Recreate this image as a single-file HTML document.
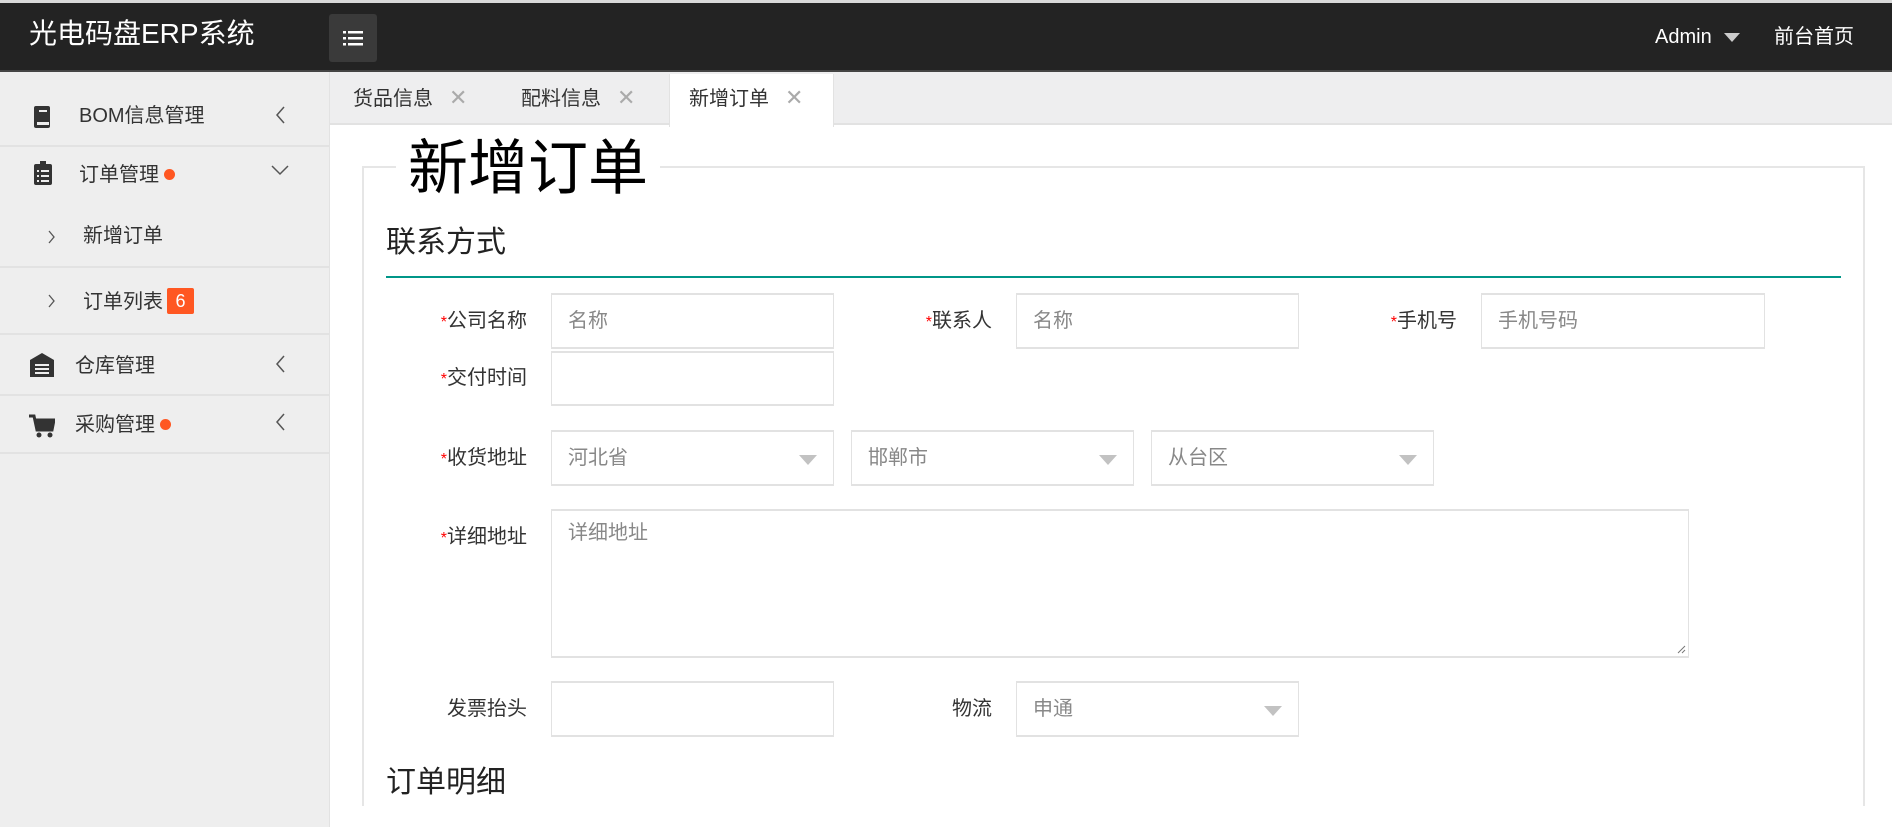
<!DOCTYPE html>
<html><head><meta charset="utf-8"><style>
*{box-sizing:border-box;margin:0;padding:0}
body{width:1892px;height:827px;overflow:hidden;background:#fff;font-family:"Liberation Sans","Noto Sans CJK SC",sans-serif;position:relative;color:#333}
.abs{position:absolute}
#top{left:0;top:0;width:1892px;height:72px;background:#232323;border-top:3px solid #d9d9d9;border-bottom:2px solid #444}
#side{left:0;top:72px;width:330px;height:755px;background:#eeeeee;border-right:1px solid #e2e2e2}
.div{position:absolute;left:0;width:330px;height:2px;background:#e2e2e2}
.st{position:absolute;font-size:20px;color:#333;line-height:24px}
.chev{position:absolute;left:274px}
.dot{display:inline-block;width:11px;height:11px;border-radius:50%;background:#ff5722;margin-left:5px;vertical-align:1px}
#tabs{left:330px;top:72px;width:1562px;height:53px;background:#eeeeef;border-bottom:2px solid #e2e2e2}
.tab{position:absolute;top:14px;font-size:20px;color:#333;line-height:24px}
.x{color:#aaa;margin-left:16px;font-size:22px}
.lab{position:absolute;font-size:20px;text-align:right;width:140px;line-height:24px;color:#333}
.lab b{color:#f00;font-weight:normal;font-size:16px}
.inp{position:absolute;border:1px solid #e2e2e2;border-top-width:2px;border-bottom-width:2px;background:#fff;font-size:20px;color:#888;padding-left:16px;line-height:52px}
.arr{position:absolute;right:16px;top:23px;width:0;height:0;border-left:9px solid transparent;border-right:9px solid transparent;border-top:10px solid #c2c2c2}
</style></head><body>
<div id="top" class="abs">
 <div class="abs" style="left:29px;top:13px;font-size:28px;color:#fff;line-height:36px">光电码盘ERP系统</div>
 <div class="abs" style="left:329px;top:11px;width:48px;height:48px;background:#3a3a3a;border-radius:3px">
  <svg width="48" height="48" viewBox="0 0 48 48"><g fill="#fff"><rect x="14" y="17" width="3" height="2.5"/><rect x="19" y="17" width="15" height="2.5"/><rect x="14" y="23" width="3" height="2.5"/><rect x="19" y="23" width="15" height="2.5"/><rect x="14" y="29" width="3" height="2.5"/><rect x="19" y="29" width="15" height="2.5"/></g></svg>
 </div>
 <div class="abs" style="left:1655px;top:21px;font-size:20px;color:#fff;line-height:26px">Admin</div>
 <div class="abs" style="left:1724px;top:30px;border-left:8px solid transparent;border-right:8px solid transparent;border-top:9px solid #ccc"></div>
 <div class="abs" style="left:1774px;top:21px;font-size:20px;color:#fff;line-height:26px">前台首页</div>
</div>
<div id="side" class="abs">
 <div class="div" style="top:73px"></div><div class="div" style="top:194px"></div><div class="div" style="top:261px"></div><div class="div" style="top:322px"></div><div class="div" style="top:380px"></div>
 <svg class="abs" style="left:33px;top:33px" width="20" height="24" viewBox="0 0 20 24"><rect x="1" y="1" width="16" height="22" rx="2" fill="#333"/><rect x="4" y="17" width="12" height="3" fill="#eee"/><rect x="6" y="5" width="8" height="2" fill="#eee"/></svg>
 <div class="st" style="left:79px;top:32px">BOM信息管理</div>
 <svg class="chev" style="top:33px" width="12" height="20" viewBox="0 0 12 20"><path d="M10 2 L3 10 L10 18" fill="none" stroke="#555" stroke-width="1.5"/></svg>
 <svg class="abs" style="left:33px;top:88px" width="20" height="26" viewBox="0 0 20 26"><rect x="1" y="4" width="18" height="21" rx="2" fill="#333"/><rect x="7" y="1" width="6" height="5" fill="#333"/><g fill="#eee"><rect x="4" y="10" width="2" height="2"/><rect x="8" y="10" width="8" height="2"/><rect x="4" y="15" width="2" height="2"/><rect x="8" y="15" width="8" height="2"/><rect x="4" y="20" width="2" height="2"/><rect x="8" y="20" width="8" height="2"/></g></svg>
 <div class="st" style="left:79px;top:91px">订单管理<span class="dot"></span></div>
 <svg class="abs" style="left:270px;top:92px" width="20" height="12" viewBox="0 0 20 12"><path d="M2 2 L10 10 L18 2" fill="none" stroke="#555" stroke-width="1.5"/></svg>
 <svg class="abs" style="left:48px;top:158px" width="8" height="14" viewBox="0 0 8 14"><path d="M1 1 L6 7 L1 13" fill="none" stroke="#555" stroke-width="1.3"/></svg>
 <div class="st" style="left:83px;top:152px">新增订单</div>
 <svg class="abs" style="left:48px;top:222px" width="8" height="14" viewBox="0 0 8 14"><path d="M1 1 L6 7 L1 13" fill="none" stroke="#555" stroke-width="1.3"/></svg>
 <div class="st" style="left:83px;top:216px">订单列表<span style="display:inline-block;width:27px;height:26px;background:#ff5722;color:#fff;text-align:center;margin-left:4px;border-radius:2px;font-size:18px;line-height:26px;vertical-align:1px">6</span></div>
 <svg class="abs" style="left:29px;top:280px" width="26" height="26" viewBox="0 0 26 26"><path d="M1 8 L13 1 L25 8 V25 H1Z" fill="#333"/><g fill="#eee"><rect x="6" y="12" width="14" height="2"/><rect x="6" y="16" width="14" height="2"/><rect x="6" y="20" width="14" height="2"/></g></svg>
 <div class="st" style="left:75px;top:282px">仓库管理</div>
 <svg class="chev" style="top:282px" width="12" height="20" viewBox="0 0 12 20"><path d="M10 2 L3 10 L10 18" fill="none" stroke="#555" stroke-width="1.5"/></svg>
 <svg class="abs" style="left:29px;top:342px" width="26" height="24" viewBox="0 0 26 24"><path d="M0 2 H5 L8 16 H23 L25 6 H7" fill="none" stroke="#333" stroke-width="3"/><path d="M7 6 H25 L23 16 H8Z" fill="#333"/><circle cx="10" cy="21" r="2.5" fill="#333"/><circle cx="21" cy="21" r="2.5" fill="#333"/></svg>
 <div class="st" style="left:75px;top:341px">采购管理<span class="dot"></span></div>
 <svg class="chev" style="top:340px" width="12" height="20" viewBox="0 0 12 20"><path d="M10 2 L3 10 L10 18" fill="none" stroke="#555" stroke-width="1.5"/></svg>
</div>
<div id="tabs" class="abs">
 <div class="tab" style="left:23px">货品信息<span class="x">✕</span></div>
 <div class="tab" style="left:191px">配料信息<span class="x">✕</span></div>
 <div class="abs" style="left:339px;top:2px;width:165px;height:53px;background:#fff;border-left:1px solid #e2e2e2;border-right:1px solid #e2e2e2"></div>
 <div class="tab" style="left:359px">新增订单<span class="x">✕</span></div>
</div>
<div class="abs" style="left:362px;top:166px;width:1503px;height:640px;border:2px solid #e6e6e6;border-bottom:none"></div>
<div class="abs" style="left:396px;top:135px;padding:0 12px;background:#fff;font-size:60px;line-height:68px;color:#000">新增订单</div>
<div class="abs" style="left:386px;top:224px;font-size:30px;line-height:38px;color:#222">联系方式</div>
<div class="abs" style="left:386px;top:276px;width:1455px;height:2px;background:#009688"></div>

<div class="lab" style="left:387px;top:309px"><b>*</b>公司名称</div>
<div class="inp" style="left:551px;top:293px;width:283px;height:56px">名称</div>
<div class="lab" style="left:852px;top:309px"><b>*</b>联系人</div>
<div class="inp" style="left:1016px;top:293px;width:283px;height:56px">名称</div>
<div class="lab" style="left:1317px;top:309px"><b>*</b>手机号</div>
<div class="inp" style="left:1481px;top:293px;width:284px;height:56px">手机号码</div>

<div class="lab" style="left:387px;top:366px"><b>*</b>交付时间</div>
<div class="inp" style="left:551px;top:351px;width:283px;height:55px"></div>

<div class="lab" style="left:387px;top:446px"><b>*</b>收货地址</div>
<div class="inp" style="left:551px;top:430px;width:283px;height:56px">河北省<div class="arr"></div></div>
<div class="inp" style="left:851px;top:430px;width:283px;height:56px">邯郸市<div class="arr"></div></div>
<div class="inp" style="left:1151px;top:430px;width:283px;height:56px">从台区<div class="arr"></div></div>

<div class="lab" style="left:387px;top:525px"><b>*</b>详细地址</div>
<div class="inp" style="left:551px;top:509px;width:1138px;height:149px;line-height:44px">详细地址
 <svg class="abs" style="right:2px;bottom:2px" width="10" height="10" viewBox="0 0 10 10"><path d="M9 2 L2 9 M9 6 L6 9" stroke="#777" stroke-width="1"/></svg></div>

<div class="lab" style="left:387px;top:697px">发票抬头</div>
<div class="inp" style="left:551px;top:681px;width:283px;height:56px"></div>
<div class="lab" style="left:852px;top:697px">物流</div>
<div class="inp" style="left:1016px;top:681px;width:283px;height:56px">申通<div class="arr"></div></div>

<div class="abs" style="left:386px;top:764px;font-size:30px;line-height:38px;color:#222">订单明细</div>
</body></html>
